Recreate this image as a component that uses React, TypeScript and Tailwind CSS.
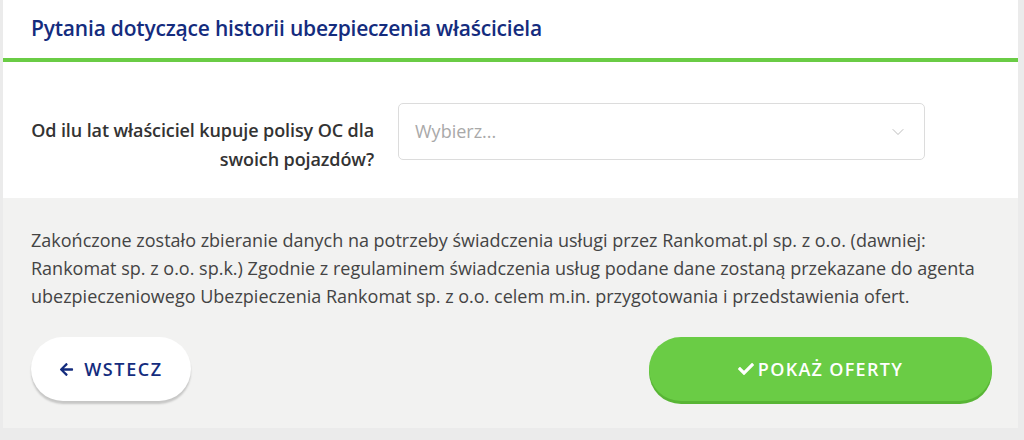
import { ChevronDown } from "lucide-react";
import { FaArrowLeft, FaCheck } from "react-icons/fa";

const font = { fontFamily: '"Open Sans", "Noto Sans", sans-serif' };

export default function App() {
  return (
    <div className="w-[1024px] h-[440px] bg-[#ebebeb] pl-[3px] pr-[6px]" style={font}>
      <div className="bg-white flex flex-col h-[428px]">
        {/* Nagłówek */}
        <div className="h-[58px] flex items-center px-7">
          <h2 className="text-[21px] font-semibold text-[#142c7e] tracking-[-0.2px]">
            Pytania dotyczące historii ubezpieczenia właściciela
          </h2>
        </div>
        <div className="h-[4px] bg-[#6acc45]" />

        {/* Pytanie */}
        <div className="h-[136px] flex items-start pt-[41px]">
          <label className="mt-[13px] w-[371px] text-right text-[18px] font-semibold text-[#333] leading-[29px] pl-6 tracking-[-0.1px]">
            Od ilu lat właściciel kupuje polisy OC dla swoich pojazdów?
          </label>
          <div className="ml-[24px] w-[527px] h-[57px] border border-[#dcdcdc] rounded-[5px] flex items-center justify-between pl-4 pr-4">
            <span className="text-[18px] text-[#a9a9a9]">Wybierz...</span>
            <ChevronDown size={20} strokeWidth={1} className="text-[#b0b0b0]" />
          </div>
        </div>

        {/* Stopka */}
        <div className="flex-1 bg-[#f2f2f1] px-7 pt-[28px]">
          <p className="text-[18px] leading-[28px] text-[#444]">
            Zakończone zostało zbieranie danych na potrzeby świadczenia usługi przez Rankomat.pl sp. z o.o. (dawniej: Rankomat sp. z o.o. sp.k.) Zgodnie z regulaminem świadczenia usług podane dane zostaną przekazane do agenta ubezpieczeniowego Ubezpieczenia Rankomat sp. z o.o. celem m.in. przygotowania i przedstawienia ofert.
          </p>
          <div className="flex justify-between items-start mt-[27px]">
            <button className="w-[160px] h-[64px] rounded-full bg-white shadow-[0_3px_2px_rgba(0,0,0,0.18)] flex items-center justify-center gap-[10px] text-[18px] font-semibold tracking-[1.6px] text-[#142c7e]">
              <FaArrowLeft size={15} className="shrink-0" />
              WSTECZ
            </button>
            <button className="mr-[-2px] w-[343px] h-[64px] rounded-full bg-[#6acc45] shadow-[0_3px_0_#58b535] flex items-center justify-center gap-[4px] text-[18px] font-semibold tracking-[1.3px] text-white">
              <FaCheck size={16} className="shrink-0" />
              POKAŻ OFERTY
            </button>
          </div>
        </div>
      </div>
    </div>
  );
}
